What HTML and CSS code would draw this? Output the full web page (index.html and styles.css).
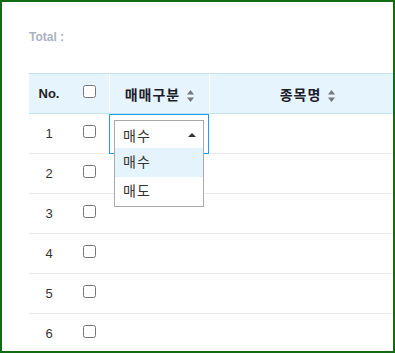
FILE: index.html
```html
<!DOCTYPE html>
<html lang="ko">
<head>
    <meta charset="UTF-8">
    <meta name="viewport" content="width=device-width, initial-scale=1.0">
    <title>매매 목록</title>
    <link rel="stylesheet" href="styles.css">
</head>
<body>
    <div class="frame">
        <div class="total">Total :</div>

        <table class="grid">
            <thead>
                <tr>
                    <th class="col-no">No.</th>
                    <th class="col-check"><input type="checkbox"></th>
                    <th class="col-type"><span class="label">매매구분</span><svg class="sort" width="7" height="12" viewBox="0 0 7 12"><path d="M3.5 0L7 4.5H0Z M0 7.5H7L3.5 12Z"/></svg></th>
                    <th class="col-name"><span class="label">종목명</span><svg class="sort" width="7" height="12" viewBox="0 0 7 12"><path d="M3.5 0L7 4.5H0Z M0 7.5H7L3.5 12Z"/></svg></th>
                </tr>
            </thead>
            <tbody>
                <tr>
                    <td class="col-no">1</td>
                    <td class="col-check"><input type="checkbox"></td>
                    <td class="col-type editing">
                        <div class="select">
                            <span>매수</span>
                            <span class="caret"></span>
                            <div class="options">
                                <div class="option active">매수</div>
                                <div class="option">매도</div>
                            </div>
                        </div>
                    </td>
                    <td class="col-name"></td>
                </tr>
                <tr>
                    <td class="col-no">2</td>
                    <td class="col-check"><input type="checkbox"></td>
                    <td class="col-type"></td>
                    <td class="col-name"></td>
                </tr>
                <tr>
                    <td class="col-no">3</td>
                    <td class="col-check"><input type="checkbox"></td>
                    <td class="col-type"></td>
                    <td class="col-name"></td>
                </tr>
                <tr>
                    <td class="col-no">4</td>
                    <td class="col-check"><input type="checkbox"></td>
                    <td class="col-type"></td>
                    <td class="col-name"></td>
                </tr>
                <tr>
                    <td class="col-no">5</td>
                    <td class="col-check"><input type="checkbox"></td>
                    <td class="col-type"></td>
                    <td class="col-name"></td>
                </tr>
                <tr>
                    <td class="col-no">6</td>
                    <td class="col-check"><input type="checkbox"></td>
                    <td class="col-type"></td>
                    <td class="col-name"></td>
                </tr>
            </tbody>
        </table>
    </div>
</body>
</html>
```

FILE: styles.css
```css
body {
    margin: 0;
    padding: 0;
    font-family: "Liberation Sans", "Noto Sans CJK KR", sans-serif;
    color: #333;
}
.frame {
    box-sizing: border-box;
    width: 395px;
    height: 353px;
    border: 2px solid #136b13;
    overflow: hidden;
    padding: 28px 0 0 27px;
    background: #fff;
}
.total {
    font-size: 12px;
    font-weight: bold;
    line-height: 14px;
    color: #aab1c2;
    margin-bottom: 29px;
}
.grid {
    border-collapse: separate;
    border-spacing: 0;
    table-layout: fixed;
    width: 376px;
    font-size: 13px;
}
.grid th {
    height: 39px;
    padding: 0;
    background: #e6f4fd;
    border-top: 1px solid #c4e2f5;
    border-bottom: 1px solid #c4e2f5;
    font-weight: bold;
    color: #222;
    text-align: center;
}
.grid td {
    height: 39px;
    padding: 0;
    border-bottom: 1px solid #ebebeb;
    text-align: center;
}
.col-no {
    width: 40px;
}
.col-check {
    width: 40px;
}
.col-type {
    width: 99px;
    border-left: 1px solid #fff;
}
.col-name {
    border-left: 1px solid #fff;
}
.label {
    font-size: 14px;
    letter-spacing: 1px;
    color: #1c1c2c;
}
.grid input[type="checkbox"] {
    width: 13px;
    height: 13px;
    margin: 0 0 4px 0;
    vertical-align: middle;
}
.sort {
    fill: #777;
    vertical-align: -2px;
    margin-left: 7px;
}
.grid td.editing {
    outline: 1px solid #1a9de8;
    outline-offset: -1px;
    vertical-align: top;
    text-align: left;
}
.select {
    position: relative;
    box-sizing: border-box;
    margin: 6px 0 0 4px;
    width: 90px;
    height: 29px;
    border: 1px solid #aaa;
    padding-left: 8px;
    display: flex;
    align-items: center;
    justify-content: space-between;
    font-size: 14px;
    letter-spacing: 1px;
    color: #333;
    background: #fff;
}
.caret {
    width: 0;
    height: 0;
    border-left: 4px solid transparent;
    border-right: 4px solid transparent;
    border-bottom: 4px solid #333;
    margin-right: 7px;
}
.options {
    position: absolute;
    top: 27px;
    left: -1px;
    width: 90px;
    box-sizing: border-box;
    border: 1px solid #aaa;
    border-top: none;
    background: #fff;
    z-index: 2;
}
.option {
    height: 29px;
    line-height: 29px;
    padding-left: 8px;
}
.option.active {
    background: #e4f3fc;
}
```
